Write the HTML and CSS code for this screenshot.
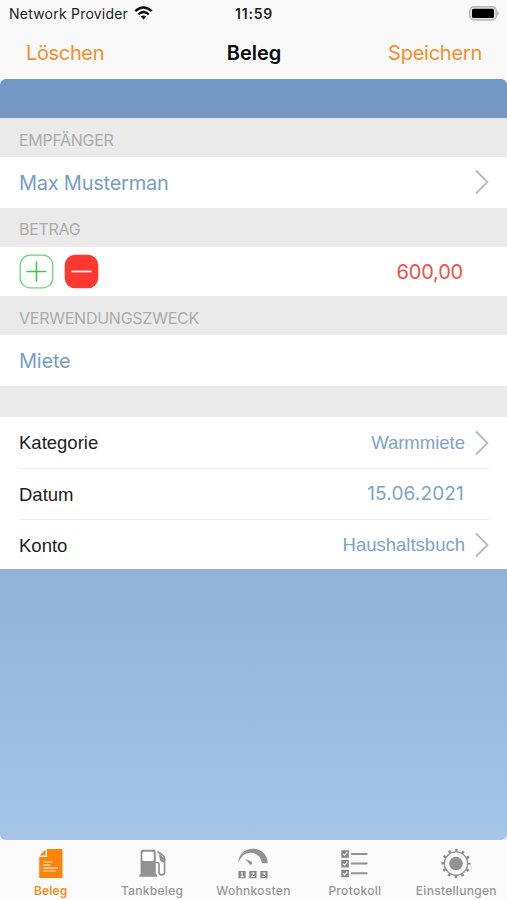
FILE: index.html
```
<!DOCTYPE html>
<html lang="de">
<head>
<meta charset="utf-8">
<title>Beleg</title>
<link rel="stylesheet" href="styles.css">
</head>
<body>
<div class="app">
  <header class="top">
    <div class="status">
      <div class="carrier"><span class="carrier-name">Network Provider</span>
        <svg class="wifi" viewBox="0 0 18 14" width="19" height="14"><g fill="none" stroke="#080808" stroke-width="2.3"><path d="M.8 5.1Q9-2.1 17.2 5.1"/><path d="M3.8 8.3Q9 3.8 14.2 8.3"/></g><path d="M6.2 10.6Q9 8.3 11.8 10.6L9 13.4Z" fill="#080808"/></svg>
      </div>
      <span class="time">11:59</span>
      <svg class="battery" viewBox="0 0 31 15" width="31" height="15"><rect x=".8" y=".8" width="26.4" height="13.2" rx="4" fill="#e4e4e4" stroke="#b8b8b8" stroke-width="1.4"/><rect x="3" y="2.8" width="22" height="9.2" rx="1.6" fill="#000"/><path d="M28.3 4.8Q31 7.4 28.3 10Z" fill="#aaa"/></svg>
    </div>
    <nav class="navbar">
      <a class="action delete">Löschen</a>
      <h1 class="title">Beleg</h1>
      <a class="action save">Speichern</a>
    </nav>
  </header>
  <main class="content">
    <h2 class="section">EMPFÄNGER</h2>
    <div class="row"><span class="value payee">Max Musterman</span><svg class="chevron" viewBox="0 0 14 26" width="14" height="26"><path d="M1 1.5 12.5 13 1 24.5"/></svg></div>
    <h2 class="section betrag">BETRAG</h2>
    <div class="row amount-row">
      <div class="buttons">
        <svg width="35" height="35" viewBox="0 0 35 35"><rect x="1.2" y="1.2" width="32.6" height="32.6" rx="10" fill="#fff" stroke="#67d776" stroke-width="1.3"/><path d="M7.5 17.5h20M17.5 7.5v20" stroke="#3fc653" stroke-width="1.6"/></svg>
        <svg width="35" height="35" viewBox="0 0 35 35"><rect x=".7" y=".7" width="33.6" height="33.6" rx="10.5" fill="#ff3930"/><path d="M7.5 17.5h20" stroke="#fff" stroke-width="1.7"/></svg>
      </div>
      <span class="amount">600,00</span>
    </div>
    <h2 class="section zweck">VERWENDUNGSZWECK</h2>
    <div class="row"><span class="value miete">Miete</span></div>
    <div class="gap"></div>
    <div class="details">
      <div class="detail"><span class="label kategorie">Kategorie</span><span class="choice warm">Warmmiete</span><svg class="chevron" viewBox="0 0 14 26" width="14" height="26"><path d="M1 1.5 12.5 13 1 24.5"/></svg></div>
      <div class="detail"><span class="label datum">Datum</span><span class="choice date">15.06.2021</span></div>
      <div class="detail"><span class="label konto">Konto</span><span class="choice haushalt">Haushaltsbuch</span><svg class="chevron" viewBox="0 0 14 26" width="14" height="26"><path d="M1 1.5 12.5 13 1 24.5"/></svg></div>
    </div>
  </main>
  <nav class="tabs">
    <a class="tab active"><svg viewBox="0 0 32 32" width="32" height="32"><path d="M12 1H27.5V30H4.2V9H12Z" fill="#ff8209"/><path d="M4.6 7.5 10.5 1.4V7.5Z" fill="#ff8209"/><path d="M8 14h9.5M8 17.1h7.5M8 20.1h15M8 23h12.5" stroke="#ffe8cf" stroke-width="1.2"/></svg><span class="t1">Beleg</span></a>
    <a class="tab"><svg viewBox="0 0 32 32" width="32" height="32"><path d="M6.5 1.7H17.5Q19.8 1.7 19.8 4V26.5H21.2V28.8H3.3V26.5H4.6V4Q4.6 1.7 6.5 1.7Z" fill="#929292"/><rect x="6.4" y="3.8" width="11.4" height="9.2" rx="1.5" fill="#fcfcfc"/><path d="M19.5 14.5H21Q23 14.5 23 16.5V24Q23 26.8 25.4 26.8 28.6 26.8 28.6 24V11Q28.6 9 26.5 7.2L21.5 3.5" fill="none" stroke="#929292" stroke-width="1.7"/><path d="M23 6 28 10V14.5Q23.5 13.5 23.5 10Z" fill="#929292"/></svg><span class="t2">Tankbeleg</span></a>
    <a class="tab"><svg viewBox="0 0 32 32" width="32" height="32"><path d="M1.3 15.3C1.3 6.5 7.5.8 15.9.8S30.7 6.8 30.7 15.3H24.8C24.3 9 19.5 4.8 13.5 4.8 7.5 4.8 3 9.5 1.3 15.3Z" fill="#929292"/><path d="M8.4 10.7 14.6 13.8Q15.8 17.2 13 16.8Z" fill="#929292"/><path d="M1.4 23h7.2v7.2H1.4ZM12.3 23h7.3v7.2H12.3ZM23.3 23h7.3v7.2H23.3Z" fill="#898989"/><path d="M3.9 25.2 5.2 24.6V29M3.7 28.7h3M14.3 25h3L14.5 28.5H17.8M25.3 25h3L26.8 26.3Q28.8 26.5 28.3 28L27.8 28.5H25.3" fill="none" stroke="#fafafa" stroke-width="1"/></svg><span class="t3">Wohnkosten</span></a>
    <a class="tab"><svg viewBox="0 0 32 32" width="32" height="32"><path d="M2.3 2.2h7.5v7.5H2.3ZM2.3 12h7.5v7.5H2.3ZM2.3 21.8h7.5v7.5H2.3Z" fill="#868686"/><path d="M4 5.8 5.5 7.3 8.2 4M4 15.6 5.5 17.1 8.2 13.8M4 25.4 5.5 26.9 8.2 23.6" fill="none" stroke="#fff" stroke-width="1.1"/><path d="M12.7 6h15M12.7 15.5h15M12.7 25.2h15" stroke="#929292" stroke-width="1.9" stroke-linecap="round"/></svg><span class="t4">Protokoll</span></a>
    <a class="tab"><svg viewBox="0 0 32 32" width="32" height="32"><circle cx="16" cy="15.5" r="6.8" fill="#929292"/><circle cx="16" cy="15.5" r="11.6" fill="none" stroke="#929292" stroke-width="1.4"/><circle cx="16" cy="15.5" r="13.3" fill="none" stroke="#888" stroke-width="2.7" stroke-dasharray="2.5 4.464" stroke-dashoffset="1.25"/></svg><span class="t5">Einstellungen</span></a>
  </nav>
</div>
</body>
</html>
```

FILE: styles.css
```
* { box-sizing: border-box; }
body { margin: 0; background: #f9f9f9; font-family: Inter, "Liberation Sans", sans-serif; }
.app { width: 507px; height: 900px; display: flex; flex-direction: column; overflow: hidden; background: #f1f0f2; }
.top { height: 79px; flex: none; background: #f9f9f9; }
.status { height: 27px; display: grid; grid-template-columns: 1fr auto 1fr; align-items: center; padding: 0 7px 0 9px; color: #1c1c1c; }
.carrier { display: flex; align-items: center; gap: 6px; font-size: 14px; letter-spacing: .22px; line-height: 27px; white-space: nowrap; }
.wifi { margin-top: -2px; }
.time { font-size: 14px; font-weight: 600; letter-spacing: .8px; margin-left: -1px; }
.battery { justify-self: end; }
.navbar { height: 51px; display: grid; grid-template-columns: 1fr auto 1fr; align-items: center; padding: 0 25px; }
.action { color: #fa8d26; font-size: 20px; font-weight: 400; }
.delete { letter-spacing: -.35px; padding-left: 1px; }
.save { justify-self: end; letter-spacing: -.25px; }
.title { margin: 0; padding-left: 1px; font-size: 20px; font-weight: 600; color: #080808; }
.content { flex: 1; border-radius: 6px; padding-top: 39px; overflow: hidden; background: linear-gradient(#7397c3 0, #7699c5 39px, #92b2da 490px, #a6c4e8 100%); }
.section { height: 39px; margin: 0; padding: 3px 19px 0; line-height: 39px; background: #eaeaea; color: #acacac; font-size: 16px; letter-spacing: -.3px; font-weight: 400; }
.betrag { padding-top: 2px; }
.row { height: 51px; background: #fff; display: flex; align-items: center; justify-content: space-between; padding: 0 18px 0 19px; }
.value { color: #779ec5; font-size: 20px; letter-spacing: -.2px; }
.payee { letter-spacing: -.25px; }
.chevron { flex: none; fill: none; stroke: #b9b9b9; stroke-width: 1.8; }
.row .chevron { margin-top: -1px; }
.amount-row { height: 49px; padding-right: 44px; }
.buttons { display: flex; gap: 10px; }
.amount { color: #ee514a; font-size: 20px; letter-spacing: -.2px; }
.zweck { letter-spacing: -.25px; }
.gap { height: 31px; background: #eaeaea; }
.details { background: #fff; height: 152px; padding: 1px 18px 0 19px; font-family: "Liberation Sans", Arial, sans-serif; }
.detail { height: 51px; display: flex; align-items: center; border-bottom: 1px solid #efefef; padding-top: 1px; }
.detail:last-child { border: 0; }
.label { color: #1c1c1c; font-size: 18.5px; }
.kategorie { margin-top: -1px; }
.choice { margin-left: auto; color: #7da4c8; font-size: 18.5px; }
.warm { margin-top: -2px; }
.haushalt { margin-top: -2px; }
.detail .chevron { margin: -2px 0 0 10px; }
.date { margin: -2px 25px 0 auto; font-family: Inter, sans-serif; font-size: 19px; letter-spacing: .15px; }
.tabs { height: 60px; flex: none; display: grid; grid-template-columns: repeat(5, 1fr); background: #fbfbfb; }
.tab { display: flex; flex-direction: column; align-items: center; padding-top: 8px; color: #979797; font-size: 12px; font-weight: 500; }
.tab span { line-height: 15px; margin-top: 3px; letter-spacing: .3px; }
.tab.active { color: #fa8b24; }
.active span { font-weight: 600; letter-spacing: .1px; }
```
